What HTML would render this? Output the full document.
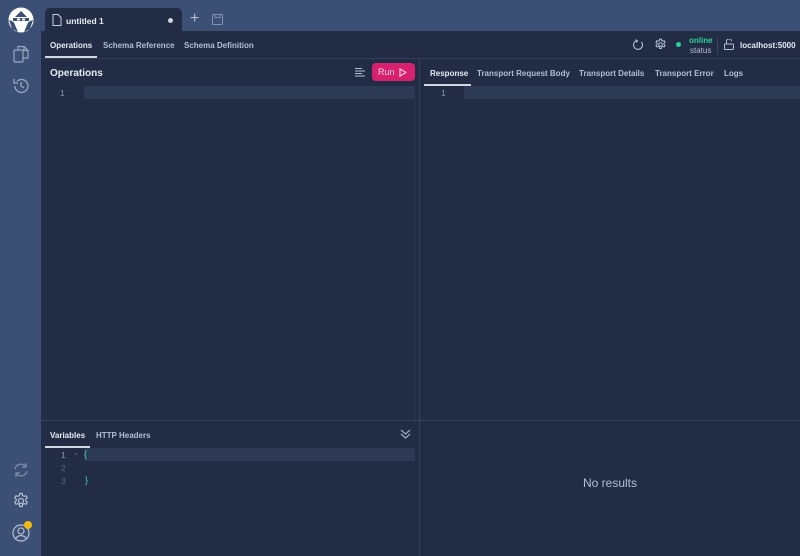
<!DOCTYPE html>
<html><head><meta charset="utf-8"><style>
*{box-sizing:border-box;margin:0;padding:0}
body{width:800px;height:556px;overflow:hidden;background:#3c4f74;font-family:"Liberation Sans",sans-serif;position:relative;color:#d8deea}
.abs{position:absolute}
.main{left:41px;top:31px;width:759px;height:525px;background:#222c45}
.t{font-size:8px;font-weight:bold;color:#b4bfd3;position:absolute}
.w{color:#e6ebf3}
svg{position:absolute}
</style></head><body>
<svg style="left:8px;top:7px" width="26" height="26" viewBox="0 0 26 26"><circle cx="13" cy="13" r="12.5" fill="#fff"/><path d="M7 10 L13 4 L19 10 Z" fill="#3c4f74"/><rect x="5" y="11" width="16" height="3" fill="#3c4f74"/><path d="M1 13 Q6 14 7 18 L10 25 L4 22 Z M25 13 Q20 14 19 18 L16 25 L22 22Z" fill="#3c4f74"/><rect x="9" y="11.5" width="3" height="2" fill="#fff"/><rect x="14" y="11.5" width="3" height="2" fill="#fff"/></svg>
<svg style="left:12px;top:45px" width="18" height="18" viewBox="0 0 18 18" fill="none" stroke="#9aa8c2" stroke-width="1.2"><rect x="2" y="5" width="9" height="12" rx="1"/><path d="M6 5V1.5h6l4 4V13h-5"/><path d="M12 1.5v4h4"/></svg>
<svg style="left:12px;top:77px" width="18" height="18" viewBox="0 0 18 18" fill="none" stroke="#9aa8c2" stroke-width="1.3"><path d="M3 9a6.5 6.5 0 1 0 2-4.7"/><path d="M2 2v4h4"/><path d="M9 5v4l3 2"/></svg>
<svg style="left:12px;top:461px" width="18" height="18" viewBox="0 0 18 18" fill="none" stroke="#7f8eab" stroke-width="1.3"><path d="M3 8a6 6 0 0 1 11-2"/><path d="M15 10a6 6 0 0 1-11 2"/><path d="M14 2v4h-4"/><path d="M4 16v-4h4"/></svg>
<svg style="left:12px;top:492px" width="18" height="18" viewBox="0 0 18 18" fill="none" stroke="#b4bfd3" stroke-width="1.2"><circle cx="9" cy="9" r="2.5"/><path d="M7.8 1.5h2.4l.4 2 1.6.9 1.9-.7 1.2 2.1-1.5 1.3v1.8l1.5 1.3-1.2 2.1-1.9-.7-1.6.9-.4 2H7.8l-.4-2-1.6-.9-1.9.7-1.2-2.1 1.5-1.3V7.1L2.7 5.8l1.2-2.1 1.9.7 1.6-.9z"/></svg>
<svg style="left:11px;top:522px" width="20" height="20" viewBox="0 0 20 20" fill="none" stroke="#b4bfd3" stroke-width="1.2"><circle cx="10" cy="11" r="8"/><circle cx="10" cy="9" r="3"/><path d="M4.5 16.5q5.5-6 11 0"/></svg>
<div class="abs" style="left:24px;top:521px;width:8px;height:8px;border-radius:50%;background:#f5b90f"></div>
<div class="abs" style="left:45px;top:8px;width:137px;height:26px;background:#222c45;border-radius:5px 5px 0 0"></div>
<svg style="left:52px;top:14px" width="10" height="12" viewBox="0 0 10 12" fill="none" stroke="#c5cede" stroke-width="1"><path d="M1 .5h5l3 3v8H1z"/></svg>
<div class="t w" style="left:66px;top:16px;font-size:8.5px">untitled 1</div>
<div class="abs" style="left:168px;top:18px;width:5px;height:5px;border-radius:50%;background:#d0d7e3"></div>
<div class="abs" style="left:190px;top:10px;font-size:16px;color:#b4bfd3">+</div>
<svg style="left:212px;top:14px" width="11" height="11" viewBox="0 0 11 11" fill="none" stroke="#8190ac"><rect x=".5" y=".5" width="10" height="10" rx="1"/><path d="M3 .5v3h5v-3"/></svg>
<div class="abs main"></div>
<div class="abs" style="left:41px;top:58px;width:759px;height:1px;background:#33405c"></div>
<div class="t w" style="left:50px;top:41px">Operations</div>
<div class="abs" style="left:45px;top:56px;width:52px;height:2px;background:#d0d7e3"></div>
<div class="t" style="left:103px;top:41px">Schema Reference</div>
<div class="t" style="left:184px;top:41px">Schema Definition</div>
<svg style="left:633px;top:39px" width="11" height="11" viewBox="0 0 11 11" fill="none" stroke="#b4bfd3" stroke-width="1.1"><path d="M4 1.5A4.5 4.5 0 1 0 8.5 3"/><path d="M3 .5 4.5 2 3 3.3"/></svg>
<svg style="left:654px;top:38px" width="13" height="13" viewBox="0 0 18 18" fill="none" stroke="#b4bfd3" stroke-width="1.4"><circle cx="9" cy="9" r="2.5"/><path d="M7.8 1.5h2.4l.4 2 1.6.9 1.9-.7 1.2 2.1-1.5 1.3v1.8l1.5 1.3-1.2 2.1-1.9-.7-1.6.9-.4 2H7.8l-.4-2-1.6-.9-1.9.7-1.2-2.1 1.5-1.3V7.1L2.7 5.8l1.2-2.1 1.9.7 1.6-.9z"/></svg>
<div class="abs" style="left:676px;top:42px;width:5px;height:5px;border-radius:50%;background:#2bd39a"></div>
<div class="t" style="left:689px;top:36px;color:#2bd39a;font-size:8px">online</div>
<div class="abs" style="left:690px;top:46px;font-size:8px;color:#b4bfd3">status</div>
<div class="abs" style="left:717px;top:38px;width:1px;height:16px;background:#3a4762"></div>
<svg style="left:724px;top:39px" width="10" height="11" viewBox="0 0 10 11" fill="none" stroke="#b4bfd3"><rect x=".5" y="5" width="9" height="5.5" rx="1"/><path d="M2.5 5V3a2.5 2.5 0 0 1 5-1"/></svg>
<div class="t w" style="left:740px;top:41px;font-size:8px">localhost:5000</div>
<div class="t w" style="left:50px;top:68px;font-size:10px">Operations</div>
<svg style="left:355px;top:67px" width="10" height="10" viewBox="0 0 10 10" stroke="#b4bfd3" stroke-width="1"><path d="M0 1.5h7M0 4h10M0 6.5h7M0 9h10"/></svg>
<div class="abs" style="left:372px;top:63px;width:43px;height:18px;background:#d7216f;border-radius:4px"></div>
<div class="abs" style="left:378px;top:67px;font-size:9px;color:#f3d2e0">Run</div>
<svg style="left:399px;top:68px" width="8" height="9" viewBox="0 0 8 9" fill="none" stroke="#f3d2e0" stroke-width="1.1"><path d="M1 1l6 3.5L1 8z"/></svg>
<div class="abs" style="left:84px;top:86px;width:331px;height:13px;background:#2d3a56"></div>
<div class="abs" style="left:60px;top:88px;font-size:8.5px;color:#8a97b0">1</div>
<div class="abs" style="left:414px;top:86px;width:1px;height:334px;background:#2c3752"></div>
<div class="abs" style="left:419px;top:59px;width:1px;height:497px;background:#34415d"></div>
<div class="t w" style="left:430px;top:69px">Response</div>
<div class="abs" style="left:424px;top:84px;width:47px;height:2px;background:#d0d7e3"></div>
<div class="t" style="left:477px;top:69px">Transport Request Body</div>
<div class="t" style="left:579px;top:69px">Transport Details</div>
<div class="t" style="left:655px;top:69px">Transport Error</div>
<div class="t" style="left:724px;top:69px">Logs</div>
<div class="abs" style="left:464px;top:86px;width:336px;height:13px;background:#2d3a56"></div>
<div class="abs" style="left:441px;top:88px;font-size:8.5px;color:#8a97b0">1</div>
<div class="abs" style="left:41px;top:420px;width:759px;height:1px;background:#34415d"></div>
<div class="t w" style="left:50px;top:431px">Variables</div>
<div class="abs" style="left:45px;top:446px;width:45px;height:2px;background:#d0d7e3"></div>
<div class="t" style="left:96px;top:431px">HTTP Headers</div>
<svg style="left:400px;top:429px" width="11" height="10" viewBox="0 0 11 10" fill="none" stroke="#b4bfd3" stroke-width="1.1"><path d="M1 1l4.5 4 4.5-4M1 5l4.5 4 4.5-4"/></svg>
<div class="abs" style="left:84px;top:448px;width:331px;height:13px;background:#2d3a56"></div>
<div class="abs" style="left:61px;top:450px;font-size:8.5px;color:#8a97b0">1</div>
<div class="abs" style="left:61px;top:463px;font-size:8.5px;color:#5a6785">2</div>
<div class="abs" style="left:61px;top:476px;font-size:8.5px;color:#5a6785">3</div>
<div class="abs" style="left:73px;top:448px;font-size:8px;color:#5a6785">⌄</div>
<div class="abs" style="left:84px;top:449px;font-size:9px;color:#3fd0b8">{</div>
<div class="abs" style="left:85px;top:475px;font-size:9px;color:#3fd0b8">}</div>
<div class="abs" style="left:583px;top:476px;font-size:12px;color:#b4bfd3">No results</div>
</body></html>
